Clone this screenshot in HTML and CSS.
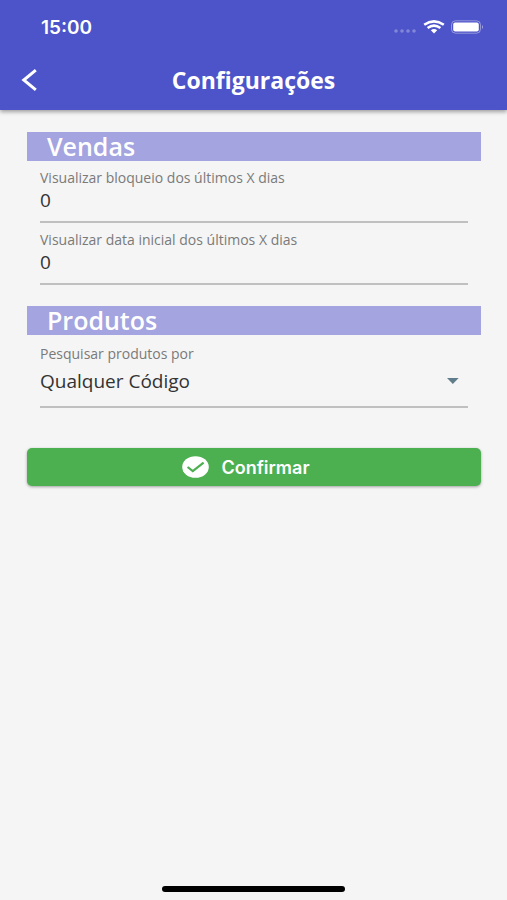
FILE: index.html
```html
<!DOCTYPE html>
<html lang="pt-BR">
<head>
    <meta charset="UTF-8">
    <meta name="viewport" content="width=device-width, initial-scale=1.0">
    <title>Configurações</title>
    <link rel="stylesheet" href="styles.css">
</head>
<body>
    <header class="header">
        <div class="status-bar">
            <span class="clock">15:00</span>
            <div class="status-icons">
                <svg width="24" height="6" viewBox="0 0 24 6" fill="#fff" opacity="0.3">
                    <circle cx="3" cy="3" r="1.8"/>
                    <circle cx="9" cy="3" r="1.8"/>
                    <circle cx="15" cy="3" r="1.8"/>
                    <circle cx="21" cy="3" r="1.8"/>
                </svg>
                <svg width="22" height="14" viewBox="0 0 22 14" fill="none" stroke="#fff" stroke-width="2.6">
                    <path d="M1.2 4.8Q11 -2 20.8 4.8"/>
                    <path d="M4.6 8Q11 3.4 17.4 8"/>
                    <path d="M7.8 10.2Q11 7.8 14.2 10.2L11 13.4Z" fill="#fff" stroke="none"/>
                </svg>
                <svg width="33" height="14" viewBox="0 0 33 14">
                    <rect x="0.5" y="0.8" width="29" height="12.4" rx="4" fill="none" stroke="#fff" stroke-opacity="0.4"/>
                    <rect x="2.2" y="2.4" width="25.6" height="9.2" rx="2" fill="#fff"/>
                    <path d="M31 5Q33 7 31 9Z" fill="#fff" fill-opacity="0.5"/>
                </svg>
            </div>
        </div>
        <div class="nav-bar">
            <button class="back" type="button" aria-label="Voltar">
                <svg width="18" height="24" viewBox="0 0 18 24" fill="none" stroke="#fff" stroke-width="3">
                    <path d="M15.8 2.2L3.8 12L15.8 21.8"/>
                </svg>
            </button>
            <h1>Configurações</h1>
        </div>
    </header>

    <form class="content">
        <section class="section">
            <h2>Vendas</h2>
            <div class="field">
                <label for="bloqueio">Visualizar bloqueio dos últimos X dias</label>
                <input id="bloqueio" type="text" inputmode="numeric" value="0">
            </div>
            <div class="field">
                <label for="data-inicial">Visualizar data inicial dos últimos X dias</label>
                <input id="data-inicial" type="text" inputmode="numeric" value="0">
            </div>
        </section>

        <section class="section">
            <h2>Produtos</h2>
            <div class="field field-select">
                <label for="pesquisa">Pesquisar produtos por</label>
                <div class="select-row">
                    <select id="pesquisa">
                        <option>Qualquer Código</option>
                    </select>
                    <svg width="12" height="6" viewBox="0 0 12 6" fill="#607d8b">
                        <path d="M0 0H12L6 6Z"/>
                    </svg>
                </div>
            </div>
        </section>

        <button class="confirm" type="button">
            <svg width="27" height="22" viewBox="0 0 27 22">
                <ellipse cx="13.5" cy="11" rx="13.3" ry="10.8" fill="#fff"/>
                <path d="M5.6 11L10.8 15.2L21.6 6.6" fill="none" stroke="#4caf50" stroke-width="2.2"/>
            </svg>
            Confirmar
        </button>
    </form>

    <div class="home-indicator"></div>
</body>
</html>
```

FILE: styles.css
```css
* {
    margin: 0;
    padding: 0;
    box-sizing: border-box;
}

body {
    display: flex;
    flex-direction: column;
    min-height: 100vh;
    font-family: "Open Sans", "Noto Sans", sans-serif;
    background: #f5f5f5;
    color: #333;
}

svg {
    display: block;
}

.header {
    background: #4d53c8;
    color: white;
    box-shadow: 0 2px 4px rgba(0,0,0,0.35);
}

.status-bar {
    display: flex;
    align-items: center;
    justify-content: space-between;
    height: 54px;
    padding: 0 23px 0 41px;
}

.clock {
    font-family: Inter, sans-serif;
    font-size: 19px;
    font-weight: 600;
}

.status-icons {
    display: flex;
    align-items: center;
    gap: 6px;
}

.status-icons svg:first-child {
    margin-top: 8px;
}

.nav-bar {
    display: grid;
    grid-template-columns: 32px 1fr 32px;
    align-items: center;
    height: 56px;
    padding: 0 20px 4px;
}

.back {
    background: none;
    border: none;
    cursor: pointer;
}

.nav-bar h1 {
    font-size: 23px;
    line-height: 28px;
    font-weight: 700;
    text-align: center;
}

.content {
    flex: 1;
    padding: 22px 26px 22px 27px;
}

.section {
    margin-bottom: 21px;
}

.section h2 {
    padding-left: 20px;
    background: #a4a4e0;
    color: white;
    font-size: 25px;
    line-height: 29px;
    font-weight: 600;
}

.field {
    display: flex;
    flex-direction: column;
    margin: 0 13px;
    padding-top: 8px;
    border-bottom: 2px solid #c0c0c0;
}

.field label {
    color: #7a7a7a;
    font-size: 14px;
    line-height: 18px;
}

.field input,
.field select {
    width: 100%;
    height: 34px;
    padding-bottom: 8px;
    border: none;
    outline: none;
    background: none;
    color: #333;
    font-family: inherit;
    font-size: 19px;
}

.field-select {
    padding-top: 10px;
}

.select-row {
    display: flex;
    align-items: center;
    height: 43px;
    padding-right: 9px;
}

.field select {
    appearance: none;
}

.select-row svg {
    margin-bottom: 8px;
}

.confirm {
    display: flex;
    align-items: center;
    justify-content: center;
    gap: 12px;
    width: 100%;
    height: 38px;
    margin-top: 40px;
    padding-right: 16px;
    border: none;
    border-radius: 5px;
    background: #4caf50;
    color: white;
    box-shadow: 0 1px 3px rgba(0,0,0,0.35);
    font-family: Inter, sans-serif;
    font-size: 18px;
    font-weight: 600;
    cursor: pointer;
}

.home-indicator {
    width: 36%;
    height: 6px;
    margin: 0 auto 8px;
    border-radius: 3px;
    background: black;
}
```
